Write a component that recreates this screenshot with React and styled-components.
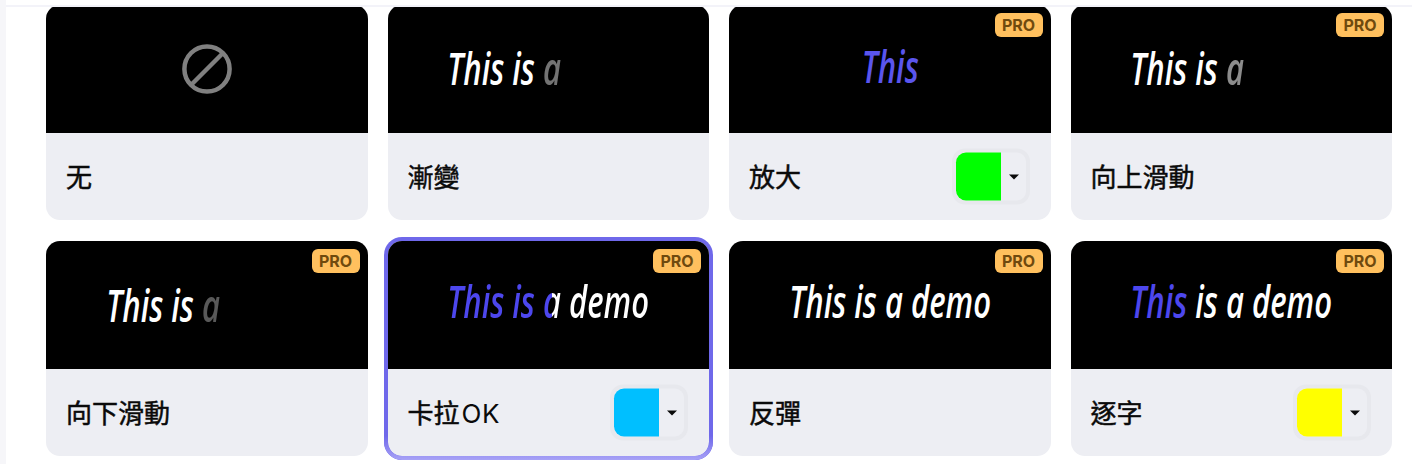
import React from "react"
import styled, { createGlobalStyle } from "styled-components"

const GlobalStyle = createGlobalStyle`
  html, body {
    margin: 0;
    padding: 0;
    background: #fff;
  }
  body {
    font-family: Inter, "Noto Sans CJK TC", "Noto Sans", sans-serif;
    overflow: hidden;
  }
`

const BLUE = "#4d47ee"

const cards = [
  { label: "无", none: true },
  { label: "漸變", text: "fade" },
  { label: "放大", pro: true, color: "#00ff00", text: "zoom" },
  { label: "向上滑動", pro: true, text: "slideUp" },
  { label: "向下滑動", pro: true, text: "slideDown" },
  { label: "卡拉", latin: "OK", pro: true, color: "#00bfff", text: "karaoke", active: true },
  { label: "反彈", pro: true, text: "bounce" },
  { label: "逐字", pro: true, color: "#ffff00", text: "word" },
]

const Demo = ({ kind }) => {
  if (kind === "fade") {
    return (
      <DemoText $y={-2}>
        This is <Dim $alpha={0.45}>a</Dim>
        <Hidden> demo</Hidden>
      </DemoText>
    )
  }
  if (kind === "slideUp") {
    return (
      <DemoText $y={-2}>
        This is <Dim $alpha={0.55}>a</Dim>
        <Hidden> demo</Hidden>
      </DemoText>
    )
  }
  if (kind === "slideDown") {
    return (
      <DemoText $y={-1.5}>
        This is <Dim $alpha={0.35}>a</Dim>
        <Hidden> demo</Hidden>
      </DemoText>
    )
  }
  if (kind === "zoom") return <ZoomText $y={-4.5}>This</ZoomText>
  if (kind === "karaoke") return <KaraokeText $y={-5}>This is a demo</KaraokeText>
  if (kind === "word") {
    return (
      <DemoText $y={-5}>
        <Blue>This</Blue> is a demo
      </DemoText>
    )
  }
  return <DemoText $y={-5}>This is a demo</DemoText>
}

const NoneIcon = () => (
  <svg width="50" height="50" viewBox="0 0 50 50" fill="none" stroke="#808080" strokeWidth="4.5">
    <circle cx="25" cy="25" r="22.6" />
    <line x1="9" y1="41" x2="41" y2="9" />
  </svg>
)

const App = () => {
  return (
    <Page>
      <GlobalStyle />
      <TopLine />
      <Grid>
        {cards.map((card) => (
          <Card key={card.label} $active={card.active}>
            <Preview>
              {card.none ? <NoneIcon /> : <Demo kind={card.text} />}
              {card.pro && <ProBadge>PRO</ProBadge>}
            </Preview>
            <Footer>
              <Label>
                {card.label}
                {card.latin && <Latin>{card.latin}</Latin>}
              </Label>
              {card.color && (
                <ColorPicker>
                  <Swatch $color={card.color} />
                  <Caret />
                </ColorPicker>
              )}
            </Footer>
          </Card>
        ))}
      </Grid>
    </Page>
  )
}

const Page = styled.div`
  position: relative;
  width: 1412px;
  height: 464px;
  box-sizing: border-box;
  border-left: 6px solid #f6f6f9;
  overflow: hidden;
  background: #fff;
`
const TopLine = styled.div`
  position: absolute;
  top: 5px;
  left: 0;
  right: 0;
  height: 2px;
  background: #f3f3f9;
  z-index: 3;
`
const Grid = styled.div`
  display: grid;
  grid-template-columns: repeat(4, 321.5px);
  column-gap: 20px;
  row-gap: 21px;
  padding: 5px 0 0 40px;
`
const Card = styled.div`
  position: relative;
  height: 215px;
  border-radius: 14px;
  background: #edeef3;
  ${(p) =>
    p.$active &&
    `
    box-shadow: 0 0 0 4px #6f68ea;
    &::after {
      content: "";
      position: absolute;
      left: -4px;
      right: -4px;
      bottom: -4px;
      height: 24px;
      border-radius: 0 0 18px 18px;
      border: 4px solid transparent;
      border-top: 0;
      box-sizing: border-box;
      background: linear-gradient(#6f68ea, #a8a2f6) border-box;
      mask: linear-gradient(#000 0 0) padding-box exclude, linear-gradient(#000 0 0) border-box;
      pointer-events: none;
    }
  `}
`
const Preview = styled.div`
  position: relative;
  height: 128px;
  display: flex;
  align-items: center;
  justify-content: center;
  background: #000;
  border-radius: 14px 14px 0 0;
  overflow: hidden;
`
const DemoText = styled.div`
  font-family: "Open Sans", sans-serif;
  font-style: italic;
  font-weight: 600;
  font-size: 45px;
  line-height: 1;
  color: #fff;
  white-space: nowrap;
  transform: translateY(${(p) => p.$y}px) scaleX(0.69);
`
const ZoomText = styled(DemoText)`
  color: #5a55ee;
`
const KaraokeText = styled(DemoText)`
  background: linear-gradient(to right, ${BLUE} 52%, #fff 52%);
  -webkit-background-clip: text;
  background-clip: text;
  color: transparent;
`
const Dim = styled.span`
  opacity: ${(p) => p.$alpha};
`
const Hidden = styled.span`
  visibility: hidden;
`
const Blue = styled.span`
  color: ${BLUE};
`
const ProBadge = styled.span`
  position: absolute;
  top: 8px;
  right: 8px;
  width: 48px;
  height: 24px;
  display: flex;
  align-items: center;
  justify-content: center;
  border-radius: 6px;
  background: #ffc05e;
  color: #6f4a0e;
  font-size: 16px;
  font-weight: 700;
`
const Footer = styled.div`
  height: 87px;
  display: flex;
  align-items: center;
  justify-content: space-between;
  padding: 0 21px 3px 20px;
  box-sizing: border-box;
`
const Label = styled.span`
  font-size: 26px;
  font-weight: 400;
  color: #0a0a0a;
  -webkit-text-stroke: 0.5px #0a0a0a;
`
const Latin = styled.span`
  margin-left: 2px;
  letter-spacing: 0.5px;
  -webkit-text-stroke: 0;
`
const ColorPicker = styled.div`
  width: 78px;
  height: 56px;
  box-sizing: border-box;
  display: flex;
  align-items: center;
  border: 4px solid #e7e8ed;
  border-radius: 13px;
  transform: translateY(1.5px);
`
const Swatch = styled.div`
  width: 45px;
  height: 48px;
  border-radius: 10px 0 0 10px;
  background: ${(p) => p.$color};
`
const Caret = styled.div`
  width: 0;
  height: 0;
  margin-left: 8px;
  border-left: 5px solid transparent;
  border-right: 5px solid transparent;
  border-top: 5px solid #0a0a0a;
`

export default App
